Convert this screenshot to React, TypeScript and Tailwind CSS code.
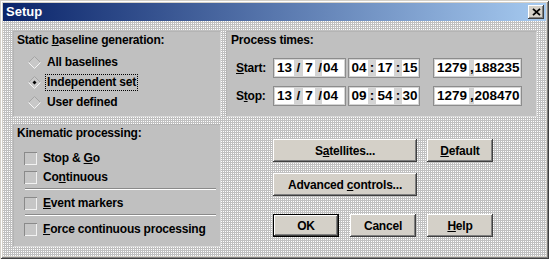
import React from "react";

const raised =
  "bg-[#d4d0c8] shadow-[inset_-1px_-1px_0_#404040,inset_1px_1px_0_#ffffff,inset_-2px_-2px_0_#808080]";

function Btn({ children, w, def }: { children: React.ReactNode; w: string; def?: boolean }) {
  if (def) {
    return (
      <div className={`${w} h-[23px] border border-black flex`}>
        <div className={`${raised} flex-1 flex items-center justify-center`}>{children}</div>
      </div>
    );
  }
  return <div className={`${raised} ${w} h-[23px] flex items-center justify-center`}>{children}</div>;
}

function Radio({ checked }: { checked?: boolean }) {
  return (
    <svg width="13" height="13" viewBox="0 0 13 13" className="shrink-0">
      <polygon points="6.5,0.5 12.5,6.5 6.5,12.5 0.5,6.5" fill="#c8c8c8" />
      <polyline points="0.5,6.5 6.5,0.5 12.5,6.5" fill="none" stroke="#a4a4a4" strokeWidth="1" />
      <polyline points="0.5,6.5 6.5,12.5 12.5,6.5" fill="none" stroke="#f6f6f6" strokeWidth="1" />
      {checked && <polygon points="6.5,4.5 8.5,6.5 6.5,8.5 4.5,6.5" fill="#000" />}
    </svg>
  );
}

function Check() {
  return (
    <div className="w-[13px] h-[13px] shrink-0 bg-[#c6c6c6] shadow-[inset_1px_1px_0_#8a8a8a,inset_-1px_-1px_0_#f2f2f2]" />
  );
}

function Seg({ children, w, align }: { children: React.ReactNode; w: string; align?: string }) {
  return (
    <div className={`${w} h-full bg-white flex items-center ${align ?? "justify-center"}`}>{children}</div>
  );
}

function Sep({ children, w, align }: { children: React.ReactNode; w: string; align?: string }) {
  return <div className={`${w} h-full flex items-center ${align ?? "justify-center"}`}>{children}</div>;
}

function Field({ w, children }: { w: string; children: React.ReactNode }) {
  return (
    <div className={`${w} h-[20px] border border-[#8c8c8c] bg-[#d4d4d4] p-[1px] flex text-[13.5px] leading-none tracking-normal`}>
      {children}
    </div>
  );
}

function Etched() {
  return <div className="ml-[8px] w-[191px] h-[2px] border-t border-[#8a8a8a] border-b border-b-white" />;
}

function DateField({ d }: { d: [string, string, string] }) {
  return (
    <Field w="w-[73px]">
      <Seg w="w-[19px]">{d[0]}</Seg>
      <Sep w="w-[9px]">/</Sep>
      <Seg w="w-[12px]">{d[1]}</Seg>
      <Sep w="w-[7px]" align="justify-end">/</Sep>
      <Seg w="flex-1" align="justify-start pl-[1px]">{d[2]}</Seg>
    </Field>
  );
}

function TimeField({ t }: { t: [string, string, string] }) {
  return (
    <Field w="w-[72px]">
      <Seg w="w-[18px]">{t[0]}</Seg>
      <Sep w="w-[8px]">:</Sep>
      <Seg w="w-[18px]">{t[1]}</Seg>
      <Sep w="w-[8px]">:</Sep>
      <Seg w="flex-1">{t[2]}</Seg>
    </Field>
  );
}

function NumField({ a, b }: { a: string; b: string }) {
  return (
    <Field w="w-[89px]">
      <Seg w="w-[34px]" align="justify-start pl-[2px]">{a}</Seg>
      <Sep w="w-[5px]" align="justify-start pl-[1px]">,</Sep>
      <Seg w="flex-1">{b}</Seg>
    </Field>
  );
}

const panel =
  "bg-[#c0c0c0] border-t border-l border-[#b4b4b4] border-b border-r border-b-[#d8d8d8] border-r-[#d8d8d8]";

export default function App() {
  return (
    <div className="w-[549px] h-[259px] bg-[#d4d0c8] p-[3px] flex flex-col shadow-[inset_1px_1px_0_#d4d0c8,inset_-1px_-1px_0_#404040,inset_2px_2px_0_#ffffff,inset_-2px_-2px_0_#808080] font-['Liberation_Sans',Arial,sans-serif] font-bold text-[12px] leading-[14px] tracking-[-0.2px] text-black select-none">
      {/* title bar */}
      <div className="h-[18px] shrink-0 bg-[linear-gradient(to_right,#0a246a,#a6caf0)] flex items-center justify-between pl-[3px] pr-[2px]">
        <span className="text-white text-[13px] tracking-normal">Setup</span>
        <div className={`${raised} w-[16px] h-[14px] flex items-center justify-center`}>
          <svg width="9" height="8" viewBox="0 0 9 8">
            <path d="M1 0.8 L8 7.2 M8 0.8 L1 7.2" stroke="#000" strokeWidth="1.8" />
          </svg>
        </div>
      </div>

      {/* client area */}
      <div className="flex-1 bg-[image:conic-gradient(#c0c0c0_0_75%,#ffffff_0)] bg-[length:2px_2px] pl-[10px] pt-[10px] flex flex-col gap-[7px]">
        {/* row 1 */}
        <div className="flex gap-[5px] h-[86px]">
          <div className={`w-[208px] h-full ${panel} pl-[3px] pt-[1px]`}>
            <div>
              Static <u>b</u>aseline generation:
            </div>
            <div className="mt-[5px] flex flex-col pl-[11px]">
              <div className="h-[20px] flex items-center gap-[5px]">
                <Radio />
                <span className="px-[1px]">All baselines</span>
              </div>
              <div className="h-[20px] flex items-center gap-[5px]">
                <Radio checked />
                <span className="px-[1px] outline outline-1 outline-dotted outline-black h-[15px] leading-[15px]">
                  Independent set
                </span>
              </div>
              <div className="h-[20px] flex items-center gap-[5px]">
                <Radio />
                <span className="px-[1px]">User defined</span>
              </div>
            </div>
          </div>

          <div className={`w-[311px] h-full ${panel} pl-[4px] pt-[1px]`}>
            <div>Process times:</div>
            <div className="mt-[11px] flex flex-col gap-[8px]">
              <div className="flex items-center">
                <div className="w-[42px] pl-[5px]">
                  <u>S</u>tart:
                </div>
                <DateField d={["13", "7", "04"]} />
                <div className="w-[2px]" />
                <TimeField t={["04", "17", "15"]} />
                <div className="w-[13px]" />
                <NumField a="1279" b="188235" />
              </div>
              <div className="flex items-center">
                <div className="w-[42px] pl-[5px]">
                  S<u>t</u>op:
                </div>
                <DateField d={["13", "7", "04"]} />
                <div className="w-[2px]" />
                <TimeField t={["09", "54", "30"]} />
                <div className="w-[13px]" />
                <NumField a="1279" b="208470" />
              </div>
            </div>
          </div>
        </div>

        {/* row 2 */}
        <div className="flex h-[123px]">
          <div className={`w-[208px] h-full ${panel} pl-[3px] pt-[1px]`}>
            <div>Kinematic processing:</div>
            <div className="mt-[9px] flex flex-col">
              <div className="h-[18px] flex items-center gap-[6px] pl-[7px]">
                <Check />
                <span>
                  Stop &amp; <u>G</u>o
                </span>
              </div>
              <div className="h-[18px] mt-[1px] flex items-center gap-[6px] pl-[7px]">
                <Check />
                <span>
                  Co<u>n</u>tinuous
                </span>
              </div>
              <div className="mt-[2px]">
                <Etched />
              </div>
              <div className="h-[18px] mt-[4px] flex items-center gap-[6px] pl-[7px]">
                <Check />
                <span>
                  <u>E</u>vent markers
                </span>
              </div>
              <div className="mt-[2px]">
                <Etched />
              </div>
              <div className="h-[18px] mt-[4px] flex items-center gap-[6px] pl-[7px]">
                <Check />
                <span>
                  <u>F</u>orce continuous processing
                </span>
              </div>
            </div>
          </div>

          <div className="ml-[52px] pt-[15px] flex flex-col">
            <div className="flex gap-[10px]">
              <Btn w="w-[144px]">
                <span>
                  S<u>a</u>tellites...
                </span>
              </Btn>
              <Btn w="w-[66px]">
                <span>
                  <u>D</u>efault
                </span>
              </Btn>
            </div>
            <div className="mt-[11px]">
              <Btn w="w-[144px]">
                <span>
                  Advanced <u>c</u>ontrols...
                </span>
              </Btn>
            </div>
            <div className="mt-[18px] flex gap-[11px]">
              <Btn w="w-[66px]" def>
                <span>OK</span>
              </Btn>
              <Btn w="w-[66px]">
                <span>Cancel</span>
              </Btn>
              <Btn w="w-[66px]">
                <span>
                  <u>H</u>elp
                </span>
              </Btn>
            </div>
          </div>
        </div>
      </div>
    </div>
  );
}
